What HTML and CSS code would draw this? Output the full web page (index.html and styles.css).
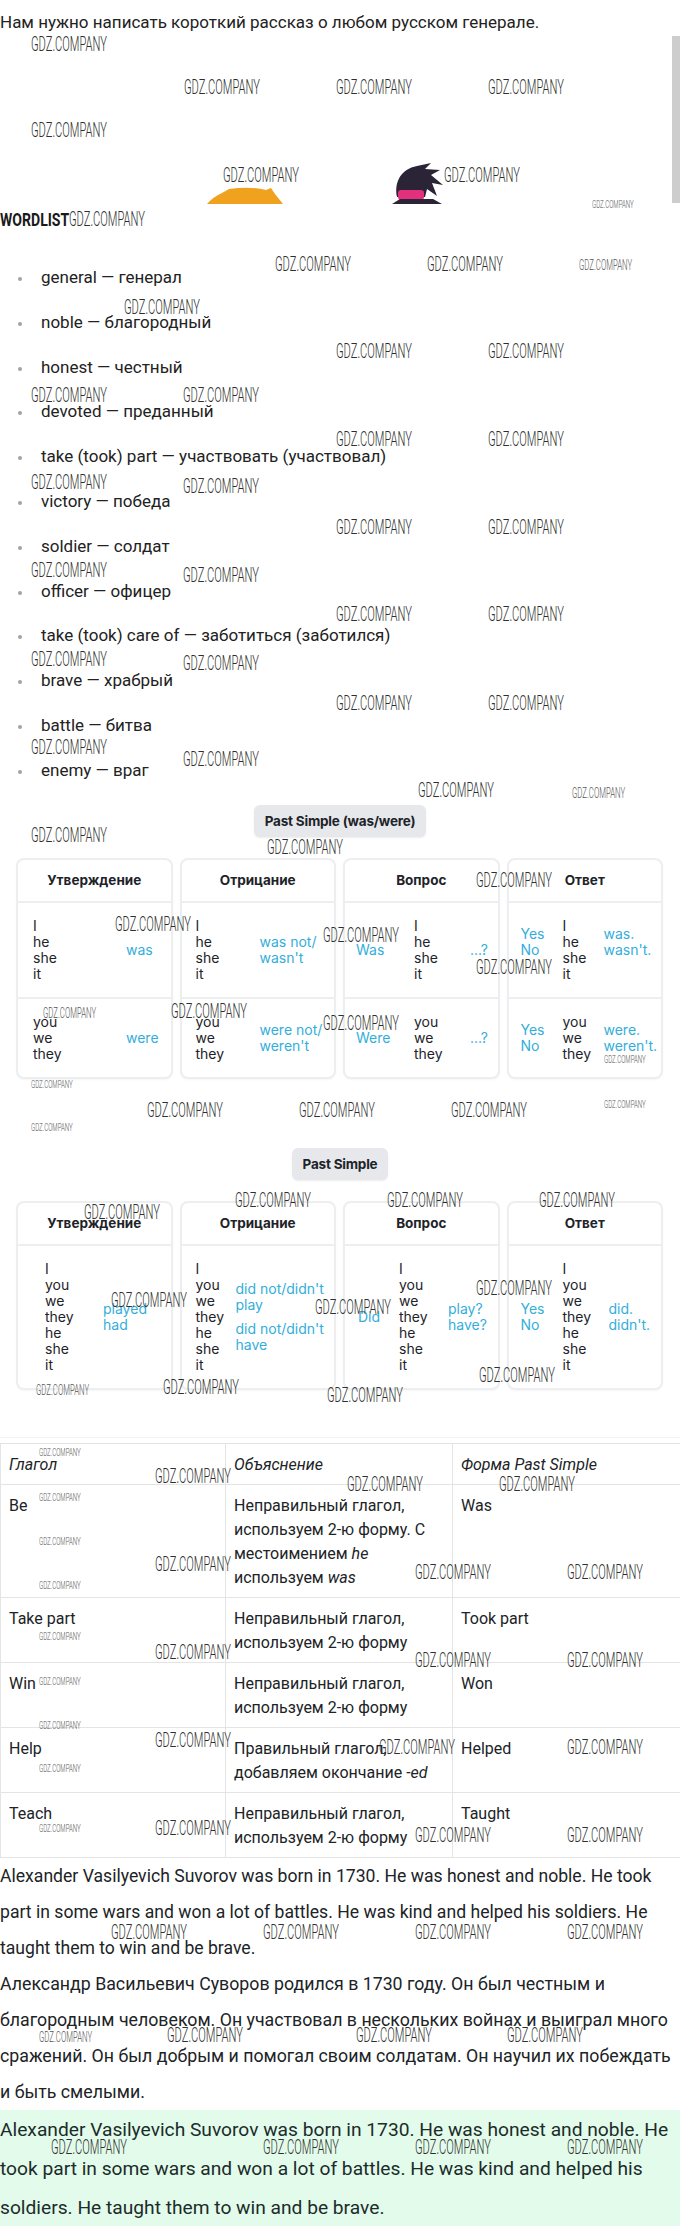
FILE: index.html
```html
<!DOCTYPE html>
<html lang="ru">
<head>
<meta charset="utf-8">
<title>Suvorov</title>
<link rel="stylesheet" href="styles.css">
</head>
<body>
<p class="title">Нам нужно написать короткий рассказ о любом русском генерале.</p>

<div class="art">
  <svg class="art-svg" width="680" height="174" viewBox="0 34 680 174" aria-hidden="true">
    <rect x="672" y="36" width="8" height="167" fill="#cdcdcd"/>
    <path d="M207 204 Q213 197 222 193 L229 189 Q250 186 266 190 L271 188 L275 194 L283 204 Z" fill="#f0a21e"/>
    <path d="M397 197 C394 182 401 169 417 166 L431 163 L425 169 L440 170 L431 175 L443 185 L432 183 L437 196 L427 189 L425 197 Z" fill="#2b2336"/>
    <rect x="398" y="190" width="26" height="10" rx="3" fill="#e2307c"/>
    <path d="M392 204 L442 204 L433 199 L400 199 Z" fill="#2b2336"/>
  </svg>
</div>

<h2 class="wordlist"><span class="wordlist-text">WORDLIST</span></h2>

<ul class="words">
  <li>general — генерал</li>
  <li>noble — благородный</li>
  <li>honest — честный</li>
  <li>devoted — преданный</li>
  <li>take (took) part — участвовать (участвовал)</li>
  <li>victory — победа</li>
  <li>soldier — солдат</li>
  <li>officer — офицер</li>
  <li>take (took) care of — заботиться (заботился)</li>
  <li>brave — храбрый</li>
  <li>battle — битва</li>
  <li>enemy — враг</li>
</ul>

<div class="badge-wrap first"><span class="badge">Past Simple (was/were)</span></div>

<div class="cards">
  <div class="card">
    <div class="card-head">Утверждение</div>
    <div class="card-row pad15">
      <div class="col w93">I<br>he<br>she<br>it</div>
      <div class="col blue">was</div>
    </div>
    <div class="card-row pad15">
      <div class="col w93">you<br>we<br>they</div>
      <div class="col blue">were</div>
    </div>
  </div>
  <div class="card">
    <div class="card-head">Отрицание</div>
    <div class="card-row pad14">
      <div class="col w64">I<br>he<br>she<br>it</div>
      <div class="col blue">was not/<br>wasn't</div>
    </div>
    <div class="card-row pad14">
      <div class="col w64">you<br>we<br>they</div>
      <div class="col blue">were not/<br>weren't</div>
    </div>
  </div>
  <div class="card">
    <div class="card-head">Вопрос</div>
    <div class="card-row pad11">
      <div class="col w58 blue">Was</div>
      <div class="col w56">I<br>he<br>she<br>it</div>
      <div class="col blue">...?</div>
    </div>
    <div class="card-row pad11">
      <div class="col w58 blue">Were</div>
      <div class="col w56">you<br>we<br>they</div>
      <div class="col blue">...?</div>
    </div>
  </div>
  <div class="card">
    <div class="card-head">Ответ</div>
    <div class="card-row pad12">
      <div class="col w42 blue lift">Yes<br>No</div>
      <div class="col w41">I<br>he<br>she<br>it</div>
      <div class="col blue lift">was.<br>wasn't.</div>
    </div>
    <div class="card-row pad12">
      <div class="col w42 blue">Yes<br>No</div>
      <div class="col w41">you<br>we<br>they</div>
      <div class="col blue">were.<br>weren't.</div>
    </div>
  </div>
</div>

<div class="badge-wrap second"><span class="badge">Past Simple</span></div>

<div class="cards">
  <div class="card">
    <div class="card-head">Утверждение</div>
    <div class="card-row pad27">
      <div class="col w58">I<br>you<br>we<br>they<br>he<br>she<br>it</div>
      <div class="col blue">played<br>had</div>
    </div>
  </div>
  <div class="card">
    <div class="card-head">Отрицание</div>
    <div class="card-row pad14">
      <div class="col w40">I<br>you<br>we<br>they<br>he<br>she<br>it</div>
      <div class="col blue"><div class="group">did not/didn't<br>play</div><div class="group">did not/didn't<br>have</div></div>
    </div>
  </div>
  <div class="card">
    <div class="card-head">Вопрос</div>
    <div class="card-row pad13">
      <div class="col w41 blue">Did</div>
      <div class="col w49">I<br>you<br>we<br>they<br>he<br>she<br>it</div>
      <div class="col blue">play?<br>have?</div>
    </div>
  </div>
  <div class="card">
    <div class="card-head">Ответ</div>
    <div class="card-row pad12">
      <div class="col w42 blue">Yes<br>No</div>
      <div class="col w46">I<br>you<br>we<br>they<br>he<br>she<br>it</div>
      <div class="col blue">did.<br>didn't.</div>
    </div>
  </div>
</div>

<div class="verbs-wrap">
  <table class="verbs">
    <colgroup><col class="c1"><col class="c2"><col class="c3"></colgroup>
    <thead>
      <tr><th>Глагол</th><th>Объяснение</th><th>Форма Past Simple</th></tr>
    </thead>
    <tbody>
      <tr><td>Be</td><td>Неправильный глагол, используем 2-ю форму. С местоимением <em>he</em> используем <em>was</em></td><td>Was</td></tr>
      <tr><td>Take part</td><td>Неправильный глагол, используем 2-ю форму</td><td>Took part</td></tr>
      <tr><td>Win</td><td>Неправильный глагол, используем 2-ю форму</td><td>Won</td></tr>
      <tr><td>Help</td><td>Правильный глагол, добавляем окончание <em>-ed</em></td><td>Helped</td></tr>
      <tr><td>Teach</td><td>Неправильный глагол, используем 2-ю форму</td><td>Taught</td></tr>
    </tbody>
  </table>
</div>

<p class="story en">Alexander Vasilyevich Suvorov was born in 1730. He was honest and noble. He took part in some wars and won a lot of battles. He was kind and helped his soldiers. He taught them to win and be brave.</p>
<p class="story ru">Александр Васильевич Суворов родился в 1730 году. Он был честным и благородным человеком. Он участвовал в нескольких войнах и выиграл много сражений. Он был добрым и помогал своим солдатам. Он научил их побеждать и быть смелыми.</p>
<p class="answer">Alexander Vasilyevich Suvorov was born in 1730. He was honest and noble. He took part in some wars and won a lot of battles. He was kind and helped his soldiers. He taught them to win and be brave.</p>

<div class="wm-layer" aria-hidden="true">
  <span class="wm" style="left:31px;top:37px">GDZ.COMPANY</span>
  <span class="wm" style="left:184px;top:80px">GDZ.COMPANY</span>
  <span class="wm" style="left:336px;top:80px">GDZ.COMPANY</span>
  <span class="wm" style="left:488px;top:80px">GDZ.COMPANY</span>
  <span class="wm" style="left:31px;top:123px">GDZ.COMPANY</span>
  <span class="wm" style="left:223px;top:168px">GDZ.COMPANY</span>
  <span class="wm" style="left:444px;top:168px">GDZ.COMPANY</span>
  <span class="wm wm-s" style="left:592px;top:200px">GDZ.COMPANY</span>
  <span class="wm" style="left:69px;top:212px">GDZ.COMPANY</span>
  <span class="wm" style="left:275px;top:257px">GDZ.COMPANY</span>
  <span class="wm" style="left:427px;top:257px">GDZ.COMPANY</span>
  <span class="wm wm-m" style="left:579px;top:260px">GDZ.COMPANY</span>
  <span class="wm" style="left:124px;top:300px">GDZ.COMPANY</span>
  <span class="wm" style="left:336px;top:344px">GDZ.COMPANY</span>
  <span class="wm" style="left:488px;top:344px">GDZ.COMPANY</span>
  <span class="wm" style="left:31px;top:388px">GDZ.COMPANY</span>
  <span class="wm" style="left:183px;top:388px">GDZ.COMPANY</span>
  <span class="wm" style="left:336px;top:432px">GDZ.COMPANY</span>
  <span class="wm" style="left:488px;top:432px">GDZ.COMPANY</span>
  <span class="wm" style="left:31px;top:475px">GDZ.COMPANY</span>
  <span class="wm" style="left:183px;top:479px">GDZ.COMPANY</span>
  <span class="wm" style="left:336px;top:520px">GDZ.COMPANY</span>
  <span class="wm" style="left:488px;top:520px">GDZ.COMPANY</span>
  <span class="wm" style="left:31px;top:563px">GDZ.COMPANY</span>
  <span class="wm" style="left:183px;top:568px">GDZ.COMPANY</span>
  <span class="wm" style="left:336px;top:607px">GDZ.COMPANY</span>
  <span class="wm" style="left:488px;top:607px">GDZ.COMPANY</span>
  <span class="wm" style="left:31px;top:652px">GDZ.COMPANY</span>
  <span class="wm" style="left:183px;top:656px">GDZ.COMPANY</span>
  <span class="wm" style="left:336px;top:696px">GDZ.COMPANY</span>
  <span class="wm" style="left:488px;top:696px">GDZ.COMPANY</span>
  <span class="wm" style="left:31px;top:740px">GDZ.COMPANY</span>
  <span class="wm" style="left:183px;top:752px">GDZ.COMPANY</span>
  <span class="wm" style="left:418px;top:783px">GDZ.COMPANY</span>
  <span class="wm wm-m" style="left:572px;top:788px">GDZ.COMPANY</span>
  <span class="wm" style="left:31px;top:828px">GDZ.COMPANY</span>
  <span class="wm" style="left:267px;top:840px">GDZ.COMPANY</span>
  <span class="wm" style="left:476px;top:873px">GDZ.COMPANY</span>
  <span class="wm" style="left:115px;top:917px">GDZ.COMPANY</span>
  <span class="wm" style="left:323px;top:928px">GDZ.COMPANY</span>
  <span class="wm" style="left:476px;top:960px">GDZ.COMPANY</span>
  <span class="wm" style="left:171px;top:1004px">GDZ.COMPANY</span>
  <span class="wm wm-m" style="left:43px;top:1008px">GDZ.COMPANY</span>
  <span class="wm" style="left:323px;top:1016px">GDZ.COMPANY</span>
  <span class="wm wm-s" style="left:604px;top:1055px">GDZ.COMPANY</span>
  <span class="wm wm-s" style="left:31px;top:1080px">GDZ.COMPANY</span>
  <span class="wm wm-s" style="left:604px;top:1100px">GDZ.COMPANY</span>
  <span class="wm" style="left:147px;top:1103px">GDZ.COMPANY</span>
  <span class="wm" style="left:299px;top:1103px">GDZ.COMPANY</span>
  <span class="wm" style="left:451px;top:1103px">GDZ.COMPANY</span>
  <span class="wm wm-s" style="left:31px;top:1123px">GDZ.COMPANY</span>
  <span class="wm" style="left:235px;top:1193px">GDZ.COMPANY</span>
  <span class="wm" style="left:387px;top:1193px">GDZ.COMPANY</span>
  <span class="wm" style="left:539px;top:1193px">GDZ.COMPANY</span>
  <span class="wm" style="left:84px;top:1205px">GDZ.COMPANY</span>
  <span class="wm" style="left:476px;top:1281px">GDZ.COMPANY</span>
  <span class="wm" style="left:111px;top:1293px">GDZ.COMPANY</span>
  <span class="wm" style="left:315px;top:1300px">GDZ.COMPANY</span>
  <span class="wm" style="left:479px;top:1368px">GDZ.COMPANY</span>
  <span class="wm" style="left:163px;top:1380px">GDZ.COMPANY</span>
  <span class="wm wm-m" style="left:36px;top:1385px">GDZ.COMPANY</span>
  <span class="wm" style="left:327px;top:1388px">GDZ.COMPANY</span>
  <span class="wm wm-s" style="left:39px;top:1448px">GDZ.COMPANY</span>
  <span class="wm" style="left:155px;top:1469px">GDZ.COMPANY</span>
  <span class="wm" style="left:347px;top:1477px">GDZ.COMPANY</span>
  <span class="wm" style="left:499px;top:1477px">GDZ.COMPANY</span>
  <span class="wm wm-s" style="left:39px;top:1493px">GDZ.COMPANY</span>
  <span class="wm wm-s" style="left:39px;top:1537px">GDZ.COMPANY</span>
  <span class="wm" style="left:155px;top:1557px">GDZ.COMPANY</span>
  <span class="wm" style="left:415px;top:1565px">GDZ.COMPANY</span>
  <span class="wm" style="left:567px;top:1565px">GDZ.COMPANY</span>
  <span class="wm wm-s" style="left:39px;top:1581px">GDZ.COMPANY</span>
  <span class="wm wm-s" style="left:39px;top:1632px">GDZ.COMPANY</span>
  <span class="wm" style="left:155px;top:1645px">GDZ.COMPANY</span>
  <span class="wm" style="left:415px;top:1653px">GDZ.COMPANY</span>
  <span class="wm" style="left:567px;top:1653px">GDZ.COMPANY</span>
  <span class="wm wm-s" style="left:39px;top:1677px">GDZ.COMPANY</span>
  <span class="wm wm-s" style="left:39px;top:1721px">GDZ.COMPANY</span>
  <span class="wm" style="left:155px;top:1733px">GDZ.COMPANY</span>
  <span class="wm" style="left:379px;top:1740px">GDZ.COMPANY</span>
  <span class="wm" style="left:567px;top:1740px">GDZ.COMPANY</span>
  <span class="wm wm-s" style="left:39px;top:1764px">GDZ.COMPANY</span>
  <span class="wm" style="left:155px;top:1821px">GDZ.COMPANY</span>
  <span class="wm wm-s" style="left:39px;top:1824px">GDZ.COMPANY</span>
  <span class="wm" style="left:415px;top:1828px">GDZ.COMPANY</span>
  <span class="wm" style="left:567px;top:1828px">GDZ.COMPANY</span>
  <span class="wm" style="left:111px;top:1925px">GDZ.COMPANY</span>
  <span class="wm" style="left:263px;top:1925px">GDZ.COMPANY</span>
  <span class="wm" style="left:415px;top:1925px">GDZ.COMPANY</span>
  <span class="wm" style="left:567px;top:1925px">GDZ.COMPANY</span>
  <span class="wm" style="left:167px;top:2028px">GDZ.COMPANY</span>
  <span class="wm" style="left:356px;top:2028px">GDZ.COMPANY</span>
  <span class="wm" style="left:507px;top:2028px">GDZ.COMPANY</span>
  <span class="wm wm-m" style="left:39px;top:2032px">GDZ.COMPANY</span>
  <span class="wm" style="left:51px;top:2140px">GDZ.COMPANY</span>
  <span class="wm" style="left:263px;top:2140px">GDZ.COMPANY</span>
  <span class="wm" style="left:415px;top:2140px">GDZ.COMPANY</span>
  <span class="wm" style="left:567px;top:2140px">GDZ.COMPANY</span>
</div>
</body>
</html>
```

FILE: styles.css
```css
* { box-sizing: border-box; }

html, body {
  margin: 0;
  padding: 0;
  background: #ffffff;
}

body {
  position: relative;
  width: 680px;
  min-height: 2226px;
  font-family: Roboto, "Noto Sans", Arial, sans-serif;
  color: #202326;
  overflow: hidden;
}

.title {
  margin: 0;
  padding-top: 10px;
  font-size: 17px;
  line-height: 24px;
  color: #222222;
}

.art {
  height: 174px;
}

.art-svg {
  display: block;
}

.wordlist {
  margin: 0;
  height: 24px;
  line-height: 24px;
  font-size: 19px;
  font-weight: 700;
  color: #1a1a1a;
  white-space: nowrap;
}

.wordlist-text {
  display: inline-block;
  transform: scaleX(0.74);
  transform-origin: left center;
}

.words {
  list-style: none;
  margin: 0;
  padding: 33px 0 0 41px;
  display: flex;
  flex-direction: column;
  row-gap: 20.8px;
}

.words li {
  position: relative;
  font-size: 17px;
  line-height: 24px;
  color: #222222;
}

.words li::before {
  content: "";
  position: absolute;
  left: -23px;
  top: 12px;
  width: 4px;
  height: 4px;
  border-radius: 50%;
  background: #a3a3a3;
}

.badge-wrap {
  display: flex;
  justify-content: center;
}

.badge-wrap.first { margin-top: 23px; }
.badge-wrap.second { margin-top: 69px; }

.badge {
  display: inline-block;
  height: 32px;
  line-height: 32px;
  padding: 0 11px;
  border-radius: 6px;
  background: #e6e8eb;
  box-shadow: 0 1px 2px rgba(0, 0, 0, 0.08);
  font-family: Inter, Roboto, sans-serif;
  font-size: 13.5px;
  font-weight: 700;
  color: #1d2329;
  letter-spacing: -0.2px;
}

.cards {
  margin-top: 21px;
  padding: 0 17px 0 16px;
  display: grid;
  grid-template-columns: repeat(4, 1fr);
  column-gap: 7px;
  align-items: stretch;
}

.card {
  border: 2px solid #eceef0;
  border-radius: 8px;
  background: #ffffff;
  box-shadow: 0 1px 2px rgba(0, 0, 0, 0.04);
  font-family: Inter, Roboto, sans-serif;
  display: flex;
  flex-direction: column;
}

.card-head {
  height: 43px;
  display: flex;
  align-items: center;
  justify-content: center;
  font-size: 13.5px;
  font-weight: 700;
  color: #1d2329;
  border-bottom: 2px solid #eceef0;
}

.card-row {
  display: flex;
  align-items: center;
  padding-top: 15px;
  padding-bottom: 15px;
  padding-right: 2px;
  font-size: 14px;
  line-height: 16px;
  color: #1d2329;
  white-space: nowrap;
}

.card-row + .card-row {
  border-top: 2px solid #eceef0;
}

.pad11 { padding-left: 11px; }
.pad12 { padding-left: 12px; }
.pad13 { padding-left: 13px; }
.pad14 { padding-left: 14px; }
.pad15 { padding-left: 15px; }
.pad27 { padding-left: 27px; }

.col { flex: none; }
.w40 { width: 40px; }
.w41 { width: 41px; }
.w42 { width: 42px; }
.w46 { width: 46px; }
.w49 { width: 49px; }
.w56 { width: 56px; }
.w58 { width: 58px; }
.w64 { width: 64px; }
.w93 { width: 93px; }

.blue { color: #33aedb; }

.lift { padding-bottom: 16px; }

.group + .group { margin-top: 8px; }

.verbs-wrap {
  margin-top: 47px;
  border-top: 1px solid #f3f3f3;
  padding-top: 5px;
}

.verbs {
  width: 680px;
  table-layout: fixed;
  border-collapse: collapse;
  font-size: 16px;
  line-height: 24px;
  color: #202326;
}

.verbs .c1 { width: 225px; }
.verbs .c2 { width: 227px; }
.verbs .c3 { width: 228px; }

.verbs th,
.verbs td {
  border: 1px solid #e4e4e4;
  padding: 9px 4px 7px 8px;
  text-align: left;
  vertical-align: top;
}

.verbs th {
  font-weight: 400;
  font-style: italic;
}

.verbs em { font-style: italic; }

.story {
  margin: 0;
  line-height: 36px;
  color: #202326;
}

.story.en { font-size: 17.6px; }
.story.ru { font-size: 17.75px; }

.answer {
  margin: 0;
  background: #e2fbea;
  font-size: 19.2px;
  line-height: 39px;
  color: #1c2b2b;
  min-height: 117px;
}

.wm-layer {
  position: absolute;
  left: 0;
  top: 0;
  width: 680px;
  height: 2226px;
  pointer-events: none;
}

.wm {
  position: absolute;
  margin-top: -3px;
  font-family: Roboto, sans-serif;
  font-weight: 300;
  font-size: 20px;
  line-height: 20px;
  color: #2e2e2e;
  white-space: nowrap;
  transform: scaleX(0.556);
  transform-origin: left top;
}

.wm.wm-m {
  margin-top: -2px;
  font-size: 14px;
  line-height: 14px;
  color: #555555;
}

.wm.wm-s {
  margin-top: -1px;
  font-size: 11px;
  line-height: 11px;
  color: #555555;
}
```
